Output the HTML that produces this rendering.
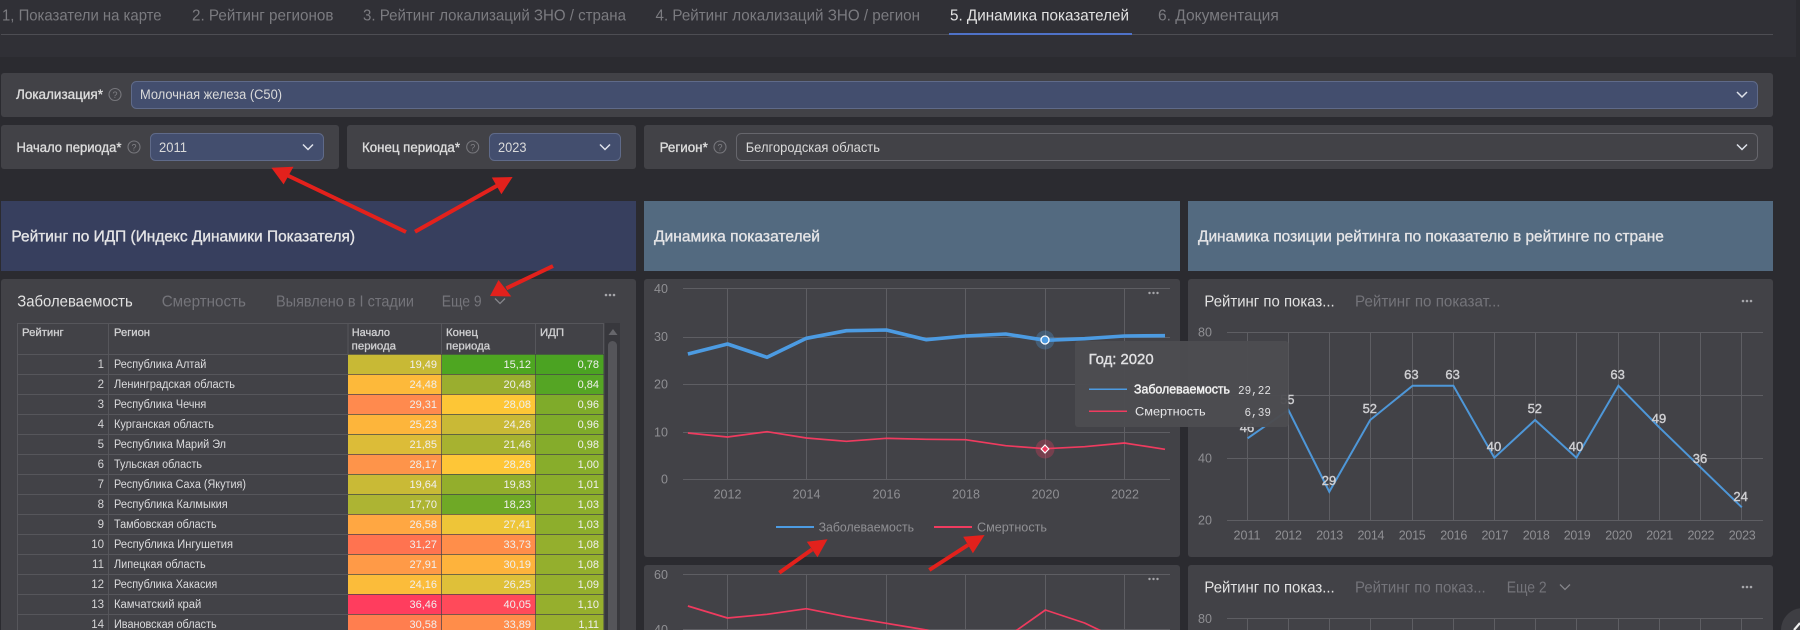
<!DOCTYPE html>
<html lang="ru"><head><meta charset="utf-8"><title>Динамика показателей</title>
<style>
html,body{margin:0;padding:0;background:#2b2b30;width:1800px;height:630px;overflow:hidden}
svg{display:block}
text{font-family:"Liberation Sans",sans-serif}
.tab{font-size:16px;fill:#7b7b80}
.tabA{font-size:16px;fill:#e2e2e2}
.lab{font-size:13.5px;fill:#dcdcdc;stroke:#dcdcdc;stroke-width:.35}
.val{font-size:13.5px;fill:#dadada}
.hd{font-size:15.5px;fill:#e4e4e6;stroke:#e4e4e6;stroke-width:.35}
.t{font-size:16px;fill:#74747a}
.ta{font-size:16px;fill:#e2e2e2}
.th{font-size:11px;fill:#d0d0d2;stroke:#d0d0d2;stroke-width:.3}
.n{font-size:11.5px;fill:#d4d4d6;text-anchor:end}
.r{font-size:11.5px;fill:#dcdcde}
.v{font-size:11px;fill:#f0f0f0;text-anchor:end}
.ax{font-size:12.5px;fill:#8f8f93}
.axm{font-size:12.5px;fill:#8f8f93;text-anchor:middle}
.dl{font-size:13px;fill:#cfcfd2;stroke:#cfcfd2;stroke-width:.4;text-anchor:middle}
.g{stroke:#5e5e63;stroke-width:1;fill:none}
.chev{fill:none;stroke:#dfe2ea;stroke-width:1.5}
.help{fill:none;stroke:#77777c;stroke-width:1.1}
.q{font-size:9px;fill:#808085;text-anchor:middle}
.dots{fill:#a6a6aa}
.red{fill:#e3211c}
.redl{stroke:#e3211c;stroke-width:4;fill:none}
</style></head>
<body>
<svg width="1800" height="630" viewBox="0 0 1800 630" xmlns="http://www.w3.org/2000/svg">
<rect width="1800" height="630" fill="#2b2b30"/>
<rect width="1796" height="57" fill="#303036"/>

<!-- tabs -->
<text class="tab" x="2" y="20.5" textLength="159.6" lengthAdjust="spacingAndGlyphs">1, Показатели на карте</text>
<text class="tab" x="192" y="20.5" textLength="141.5" lengthAdjust="spacingAndGlyphs">2. Рейтинг регионов</text>
<text class="tab" x="363" y="20.5" textLength="263" lengthAdjust="spacingAndGlyphs">3. Рейтинг локализаций ЗНО / страна</text>
<text class="tab" x="655.5" y="20.5" textLength="264.5" lengthAdjust="spacingAndGlyphs">4. Рейтинг локализаций ЗНО / регион</text>
<text class="tabA" x="950" y="20.5" textLength="179" lengthAdjust="spacingAndGlyphs">5. Динамика показателей</text>
<text class="tab" x="1158" y="20.5" textLength="120.8" lengthAdjust="spacingAndGlyphs">6. Документация</text>
<rect x="1" y="34" width="1772" height="1" fill="#4d4d53"/>
<rect x="949" y="33" width="183" height="2" fill="#4f72c8"/>

<!-- filter panels -->
<rect x="1" y="73" width="1772" height="44" rx="3" fill="#424247"/>
<rect x="131.5" y="81.5" width="1626" height="27" rx="5" fill="#434e6e" stroke="#5f6a89"/>
<text class="lab" x="16" y="99" textLength="87" lengthAdjust="spacingAndGlyphs">Локализация*</text>
<circle class="help" cx="115" cy="94.5" r="6"/><text class="q" x="115" y="98">?</text>
<text class="val" x="140" y="99" textLength="142" lengthAdjust="spacingAndGlyphs">Молочная железа (С50)</text>
<path class="chev" d="M1737 92l5 5 5-5"/>

<rect x="1" y="125" width="338" height="44" rx="3" fill="#424247"/>
<rect x="150.5" y="133.5" width="173" height="27" rx="5" fill="#434e6e" stroke="#5f6a89"/>
<text class="lab" x="16.5" y="152" textLength="105" lengthAdjust="spacingAndGlyphs">Начало периода*</text>
<circle class="help" cx="134" cy="147" r="6"/><text class="q" x="134" y="150.5">?</text>
<text class="val" x="159" y="152" textLength="28" lengthAdjust="spacingAndGlyphs">2011</text>
<path class="chev" d="M303 144.5l5 5 5-5"/>

<rect x="347" y="125" width="289" height="44" rx="3" fill="#424247"/>
<rect x="489.5" y="133.5" width="131" height="27" rx="5" fill="#434e6e" stroke="#5f6a89"/>
<text class="lab" x="362" y="152" textLength="98" lengthAdjust="spacingAndGlyphs">Конец периода*</text>
<circle class="help" cx="472.7" cy="147" r="6"/><text class="q" x="472.7" y="150.5">?</text>
<text class="val" x="498" y="152" textLength="28.5" lengthAdjust="spacingAndGlyphs">2023</text>
<path class="chev" d="M600 144.5l5 5 5-5"/>

<rect x="644" y="125" width="1129" height="44" rx="3" fill="#424247"/>
<rect x="736.5" y="133.5" width="1021" height="27" rx="5" fill="#424247" stroke="#66666c"/>
<text class="lab" x="659.6" y="152" textLength="48.2" lengthAdjust="spacingAndGlyphs">Регион*</text>
<circle class="help" cx="720" cy="147" r="6"/><text class="q" x="720" y="150.5">?</text>
<text class="val" x="745.7" y="152" textLength="134.3" lengthAdjust="spacingAndGlyphs">Белгородская область</text>
<path class="chev" d="M1737 144.5l5 5 5-5"/>

<!-- header bands -->
<rect x="1" y="201" width="635" height="70" fill="#373f5e"/>
<rect x="644" y="201" width="536" height="70" fill="#536a80"/>
<rect x="1188" y="201" width="585" height="70" fill="#536a80"/>
<text class="hd" x="11.4" y="241.5" textLength="343.6" lengthAdjust="spacingAndGlyphs">Рейтинг по ИДП (Индекс Динамики Показателя)</text>
<text class="hd" x="654" y="241.5" textLength="166" lengthAdjust="spacingAndGlyphs">Динамика показателей</text>
<text class="hd" x="1198" y="241.5" textLength="465.8" lengthAdjust="spacingAndGlyphs">Динамика позиции рейтинга по показателю в рейтинге по стране</text>

<!-- left panel -->
<rect x="1" y="279" width="635" height="360" rx="3" fill="#424247"/>
<text class="ta" x="17.3" y="306.5" textLength="115.4" lengthAdjust="spacingAndGlyphs">Заболеваемость</text>
<text class="t" x="161.7" y="306.5" textLength="84.3" lengthAdjust="spacingAndGlyphs">Смертность</text>
<text class="t" x="276" y="306.5" textLength="138" lengthAdjust="spacingAndGlyphs">Выявлено в I стадии</text>
<text class="t" x="441.7" y="306.5" textLength="40" lengthAdjust="spacingAndGlyphs">Еще 9</text>
<path d="M495 298.5l5 5 5-5" fill="none" stroke="#85858a" stroke-width="1.3"/>
<g class="dots"><circle cx="606" cy="295" r="1.3"/><circle cx="610" cy="295" r="1.3"/><circle cx="614" cy="295" r="1.3"/></g>

<!-- table grid -->
<g stroke="#56565b" fill="none">
<path d="M17.5 323.5H603.5M17.5 354.5H348M17.5 374.5H348M17.5 394.5H348M17.5 414.5H348M17.5 434.5H348M17.5 454.5H348M17.5 474.5H348M17.5 494.5H348M17.5 514.5H348M17.5 534.5H348M17.5 554.5H348M17.5 574.5H348M17.5 594.5H348M17.5 614.5H348"/>
<path d="M17.5 323V630M108.5 323V630M348 323V354M441.5 323V354M535.5 323V354M603.5 323V354"/>
</g>
<text class="th" x="22" y="336" textLength="41.7" lengthAdjust="spacingAndGlyphs">Рейтинг</text>
<text class="th" x="114" y="336" textLength="36" lengthAdjust="spacingAndGlyphs">Регион</text>
<text class="th" x="351.7" y="336" textLength="38.3" lengthAdjust="spacingAndGlyphs">Начало</text>
<text class="th" x="351.7" y="349.5" textLength="44.3" lengthAdjust="spacingAndGlyphs">периода</text>
<text class="th" x="446" y="336" textLength="32" lengthAdjust="spacingAndGlyphs">Конец</text>
<text class="th" x="446" y="349.5" textLength="44" lengthAdjust="spacingAndGlyphs">периода</text>
<text class="th" x="540" y="336" textLength="24" lengthAdjust="spacingAndGlyphs">ИДП</text>

<!-- scrollbar -->
<rect x="605" y="323" width="15" height="307" fill="#38383d"/>
<path d="M608.5 335l4.5-6 4.5 6z" fill="#66666b"/>
<rect x="608" y="341" width="9" height="295" rx="4.5" fill="#55555a"/>

<!-- cells -->
<g>
<rect x="348" y="354.7" width="93.3" height="19.3" fill="#c8b935"/><rect x="442" y="354.7" width="93.3" height="19.3" fill="#4ea621"/><rect x="536" y="354.7" width="67.5" height="19.3" fill="#4ba322"/>
<rect x="348" y="374.7" width="93.3" height="19.3" fill="#fdb93a"/><rect x="442" y="374.7" width="93.3" height="19.3" fill="#9aae2f"/><rect x="536" y="374.7" width="67.5" height="19.3" fill="#55a524"/>
<rect x="348" y="394.7" width="93.3" height="19.3" fill="#ff8a4e"/><rect x="442" y="394.7" width="93.3" height="19.3" fill="#fdc636"/><rect x="536" y="394.7" width="67.5" height="19.3" fill="#7fab2a"/>
<rect x="348" y="414.7" width="93.3" height="19.3" fill="#fdb53b"/><rect x="442" y="414.7" width="93.3" height="19.3" fill="#c9b936"/><rect x="536" y="414.7" width="67.5" height="19.3" fill="#7fab2a"/>
<rect x="348" y="434.7" width="93.3" height="19.3" fill="#dcbc38"/><rect x="442" y="434.7" width="93.3" height="19.3" fill="#a7b230"/><rect x="536" y="434.7" width="67.5" height="19.3" fill="#85ac2b"/>
<rect x="348" y="454.7" width="93.3" height="19.3" fill="#fe944a"/><rect x="442" y="454.7" width="93.3" height="19.3" fill="#fec637"/><rect x="536" y="454.7" width="67.5" height="19.3" fill="#88ad2b"/>
<rect x="348" y="474.7" width="93.3" height="19.3" fill="#c9ba36"/><rect x="442" y="474.7" width="93.3" height="19.3" fill="#93ae2c"/><rect x="536" y="474.7" width="67.5" height="19.3" fill="#8aad2b"/>
<rect x="348" y="494.7" width="93.3" height="19.3" fill="#adb433"/><rect x="442" y="494.7" width="93.3" height="19.3" fill="#6fa926"/><rect x="536" y="494.7" width="67.5" height="19.3" fill="#8dae2c"/>
<rect x="348" y="514.7" width="93.3" height="19.3" fill="#ffa742"/><rect x="442" y="514.7" width="93.3" height="19.3" fill="#eec538"/><rect x="536" y="514.7" width="67.5" height="19.3" fill="#8dae2c"/>
<rect x="348" y="534.7" width="93.3" height="19.3" fill="#ff7350"/><rect x="442" y="534.7" width="93.3" height="19.3" fill="#ff8e4a"/><rect x="536" y="534.7" width="67.5" height="19.3" fill="#94af2d"/>
<rect x="348" y="554.7" width="93.3" height="19.3" fill="#ff9a47"/><rect x="442" y="554.7" width="93.3" height="19.3" fill="#feb33c"/><rect x="536" y="554.7" width="67.5" height="19.3" fill="#94af2d"/>
<rect x="348" y="574.7" width="93.3" height="19.3" fill="#fbbc3a"/><rect x="442" y="574.7" width="93.3" height="19.3" fill="#dfc039"/><rect x="536" y="574.7" width="67.5" height="19.3" fill="#95af2d"/>
<rect x="348" y="594.7" width="93.3" height="19.3" fill="#ff3d5e"/><rect x="442" y="594.7" width="93.3" height="19.3" fill="#ff4a5a"/><rect x="536" y="594.7" width="67.5" height="19.3" fill="#96af2d"/>
<rect x="348" y="614.7" width="93.3" height="19.3" fill="#ff7e4f"/><rect x="442" y="614.7" width="93.3" height="19.3" fill="#ff8d4a"/><rect x="536" y="614.7" width="67.5" height="19.3" fill="#98af2e"/>
</g>

<g>
<text class="n" x="104" y="368">1</text><text class="r" x="114" y="368" textLength="92.3" lengthAdjust="spacingAndGlyphs">Республика Алтай</text><text class="v" x="437" y="368">19,49</text><text class="v" x="531" y="368">15,12</text><text class="v" x="599" y="368">0,78</text>
<text class="n" x="104" y="388">2</text><text class="r" x="114" y="388" textLength="121" lengthAdjust="spacingAndGlyphs">Ленинградская область</text><text class="v" x="437" y="388">24,48</text><text class="v" x="531" y="388">20,48</text><text class="v" x="599" y="388">0,84</text>
<text class="n" x="104" y="408">3</text><text class="r" x="114" y="408" textLength="92.3" lengthAdjust="spacingAndGlyphs">Республика Чечня</text><text class="v" x="437" y="408">29,31</text><text class="v" x="531" y="408">28,08</text><text class="v" x="599" y="408">0,96</text>
<text class="n" x="104" y="428">4</text><text class="r" x="114" y="428" textLength="100" lengthAdjust="spacingAndGlyphs">Курганская область</text><text class="v" x="437" y="428">25,23</text><text class="v" x="531" y="428">24,26</text><text class="v" x="599" y="428">0,96</text>
<text class="n" x="104" y="448">5</text><text class="r" x="114" y="448" textLength="112" lengthAdjust="spacingAndGlyphs">Республика Марий Эл</text><text class="v" x="437" y="448">21,85</text><text class="v" x="531" y="448">21,46</text><text class="v" x="599" y="448">0,98</text>
<text class="n" x="104" y="468">6</text><text class="r" x="114" y="468" textLength="88" lengthAdjust="spacingAndGlyphs">Тульская область</text><text class="v" x="437" y="468">28,17</text><text class="v" x="531" y="468">28,26</text><text class="v" x="599" y="468">1,00</text>
<text class="n" x="104" y="488">7</text><text class="r" x="114" y="488" textLength="132" lengthAdjust="spacingAndGlyphs">Республика Саха (Якутия)</text><text class="v" x="437" y="488">19,64</text><text class="v" x="531" y="488">19,83</text><text class="v" x="599" y="488">1,01</text>
<text class="n" x="104" y="508">8</text><text class="r" x="114" y="508" textLength="113.7" lengthAdjust="spacingAndGlyphs">Республика Калмыкия</text><text class="v" x="437" y="508">17,70</text><text class="v" x="531" y="508">18,23</text><text class="v" x="599" y="508">1,03</text>
<text class="n" x="104" y="528">9</text><text class="r" x="114" y="528" textLength="102.7" lengthAdjust="spacingAndGlyphs">Тамбовская область</text><text class="v" x="437" y="528">26,58</text><text class="v" x="531" y="528">27,41</text><text class="v" x="599" y="528">1,03</text>
<text class="n" x="104" y="548">10</text><text class="r" x="114" y="548" textLength="119" lengthAdjust="spacingAndGlyphs">Республика Ингушетия</text><text class="v" x="437" y="548">31,27</text><text class="v" x="531" y="548">33,73</text><text class="v" x="599" y="548">1,08</text>
<text class="n" x="104" y="568">11</text><text class="r" x="114" y="568" textLength="91.7" lengthAdjust="spacingAndGlyphs">Липецкая область</text><text class="v" x="437" y="568">27,91</text><text class="v" x="531" y="568">30,19</text><text class="v" x="599" y="568">1,08</text>
<text class="n" x="104" y="588">12</text><text class="r" x="114" y="588" textLength="103.3" lengthAdjust="spacingAndGlyphs">Республика Хакасия</text><text class="v" x="437" y="588">24,16</text><text class="v" x="531" y="588">26,25</text><text class="v" x="599" y="588">1,09</text>
<text class="n" x="104" y="608">13</text><text class="r" x="114" y="608" textLength="87.3" lengthAdjust="spacingAndGlyphs">Камчатский край</text><text class="v" x="437" y="608">36,46</text><text class="v" x="531" y="608">40,05</text><text class="v" x="599" y="608">1,10</text>
<text class="n" x="104" y="628">14</text><text class="r" x="114" y="628" textLength="102.7" lengthAdjust="spacingAndGlyphs">Ивановская область</text><text class="v" x="437" y="628">30,58</text><text class="v" x="531" y="628">33,89</text><text class="v" x="599" y="628">1,11</text>
</g>

<!-- center chart 1 -->
<rect x="644" y="279" width="536" height="278" rx="3" fill="#424247"/>
<path class="g" d="M683 288.5H1170M683 337.5H1170M683 384.5H1170M683 432.5H1170M683 479.5H1170"/>
<path class="g" d="M727.5 289V479M806.5 289V479M886.5 289V479M965.5 289V479M1045.5 289V479M1124.5 289V479"/>
<text class="ax" x="654" y="293">40</text><text class="ax" x="654" y="341">30</text><text class="ax" x="654" y="388.5">20</text><text class="ax" x="654" y="436.5">10</text><text class="ax" x="661" y="483.5">0</text>
<text class="axm" x="727.5" y="498.5">2012</text><text class="axm" x="806.5" y="498.5">2014</text><text class="axm" x="886.5" y="498.5">2016</text><text class="axm" x="966" y="498.5">2018</text><text class="axm" x="1045.5" y="498.5">2020</text><text class="axm" x="1125" y="498.5">2022</text>
<polyline fill="none" stroke="#4c9be2" stroke-width="3.6" stroke-linejoin="round" points="687.9,354 727.5,344 767.1,357.3 806.4,338.3 846.4,330.7 886.4,330 926.4,339.7 965.4,336 1005.7,334 1045.4,340.3 1084.6,338.7 1124.3,336 1165,335.7"/>
<polyline fill="none" stroke="#ef3b5f" stroke-width="1.7" stroke-linejoin="round" points="687.9,433 727.5,437 767.1,431.7 806.4,438 846.4,441.3 886.4,438.3 926.4,439.3 965.4,439.7 1005.7,445.7 1045.4,448.7 1084.6,446.7 1124.3,443 1165,449.3"/>
<circle cx="1045" cy="340" r="9.5" fill="#4c9be2" fill-opacity=".3"/>
<circle cx="1045" cy="340" r="4" fill="#4c9be2" stroke="#fff" stroke-width="1.3"/>
<circle cx="1045" cy="449" r="9.5" fill="#ef3b5f" fill-opacity=".3"/>
<path d="M1045 445l3.8 4-3.8 4-3.8-4z" fill="#ef3b5f" stroke="#fff" stroke-width="1.2"/>
<rect x="776" y="526" width="38" height="2" fill="#4c9be2"/>
<text class="ax" x="818.6" y="531.5" textLength="95.5" lengthAdjust="spacingAndGlyphs">Заболеваемость</text>
<rect x="934" y="526" width="38" height="2" fill="#ef3b5f"/>
<text class="ax" x="977" y="531.5" textLength="70" lengthAdjust="spacingAndGlyphs">Смертность</text>
<g class="dots"><circle cx="1149.5" cy="293" r="1.2"/><circle cx="1153.5" cy="293" r="1.2"/><circle cx="1157.5" cy="293" r="1.2"/></g>

<!-- center chart 2 -->
<rect x="644" y="565" width="536" height="80" rx="3" fill="#424247"/>
<path class="g" d="M683 574.5H1170M683 629.5H1170"/>
<path class="g" d="M727.5 575V630M806.5 575V630M886.5 575V630M965.5 575V630M1045.5 575V630M1124.5 575V630"/>
<text class="ax" x="654" y="579">60</text><text class="ax" x="654" y="634">40</text>
<polyline fill="none" stroke="#ef3b5f" stroke-width="1.7" stroke-linejoin="round" points="687.9,606 727.5,618 767.1,614.3 806.4,608.7 846.4,616.7 886.4,623.3 926.4,630 965.4,640 1005.7,638 1045.4,610 1084.6,623 1124.3,642"/>
<g class="dots"><circle cx="1149.5" cy="579" r="1.2"/><circle cx="1153.5" cy="579" r="1.2"/><circle cx="1157.5" cy="579" r="1.2"/></g>

<!-- right chart 1 -->
<rect x="1188" y="279" width="585" height="278" rx="3" fill="#424247"/>
<text class="ta" x="1204.4" y="306.5" textLength="130.3" lengthAdjust="spacingAndGlyphs">Рейтинг по показ...</text>
<text class="t" x="1355" y="306.5" textLength="145.5" lengthAdjust="spacingAndGlyphs">Рейтинг по показат...</text>
<g class="dots"><circle cx="1743" cy="301" r="1.3"/><circle cx="1747" cy="301" r="1.3"/><circle cx="1751" cy="301" r="1.3"/></g>
<path class="g" d="M1227 332.5H1763M1227 395.5H1763M1227 458.5H1763M1227 520.5H1763"/>
<path class="g" d="M1247.5 333V520M1288.5 333V520M1329.5 333V520M1370.5 333V520M1412.5 333V520M1453.5 333V520M1494.5 333V520M1535.5 333V520M1576.5 333V520M1618.5 333V520M1659.5 333V520M1700.5 333V520M1741.5 333V520"/>
<text class="ax" x="1198" y="336.5">80</text><text class="ax" x="1198" y="462.5">40</text><text class="ax" x="1198" y="524.5">20</text>
<g>
<text class="axm" x="1247" y="539.5" textLength="27" lengthAdjust="spacing">2011</text><text class="axm" x="1288.4" y="539.5" textLength="27" lengthAdjust="spacing">2012</text><text class="axm" x="1329.7" y="539.5" textLength="27" lengthAdjust="spacing">2013</text><text class="axm" x="1371" y="539.5" textLength="27" lengthAdjust="spacing">2014</text><text class="axm" x="1412.2" y="539.5" textLength="27" lengthAdjust="spacing">2015</text><text class="axm" x="1453.8" y="539.5" textLength="27" lengthAdjust="spacing">2016</text><text class="axm" x="1495" y="539.5" textLength="27" lengthAdjust="spacing">2017</text><text class="axm" x="1536.3" y="539.5" textLength="27" lengthAdjust="spacing">2018</text><text class="axm" x="1577.2" y="539.5" textLength="27" lengthAdjust="spacing">2019</text><text class="axm" x="1618.8" y="539.5" textLength="27" lengthAdjust="spacing">2020</text><text class="axm" x="1659.7" y="539.5" textLength="27" lengthAdjust="spacing">2021</text><text class="axm" x="1701" y="539.5" textLength="27" lengthAdjust="spacing">2022</text><text class="axm" x="1742.2" y="539.5" textLength="27" lengthAdjust="spacing">2023</text>
</g>
<polyline fill="none" stroke="#4e97d8" stroke-width="2" stroke-linejoin="miter" points="1247.6,438.3 1288.4,410 1329.3,491.7 1370.2,420 1412.6,385.7 1453.4,385.7 1494.3,457.7 1535.1,420 1576.4,457.7 1618.4,385.7 1659.2,427.3 1700.5,467.3 1741.8,507.3"/>
<g>
<text class="dl" x="1247" y="432">46</text><text class="dl" x="1287.3" y="404">55</text><text class="dl" x="1329" y="485">29</text><text class="dl" x="1369.8" y="413">52</text><text class="dl" x="1411.4" y="379">63</text><text class="dl" x="1452.6" y="379">63</text><text class="dl" x="1494" y="451">40</text><text class="dl" x="1534.8" y="413">52</text><text class="dl" x="1576" y="451">40</text><text class="dl" x="1617.6" y="379">63</text><text class="dl" x="1659" y="423">49</text><text class="dl" x="1700" y="463">36</text><text class="dl" x="1740.6" y="501">24</text>
</g>

<!-- right chart 2 -->
<rect x="1188" y="565" width="585" height="80" rx="3" fill="#424247"/>
<text class="ta" x="1204.4" y="592.5" textLength="130.3" lengthAdjust="spacingAndGlyphs">Рейтинг по показ...</text>
<text class="t" x="1355" y="592.5" textLength="130.7" lengthAdjust="spacingAndGlyphs">Рейтинг по показ...</text>
<text class="t" x="1506.7" y="592.5" textLength="40" lengthAdjust="spacingAndGlyphs">Еще 2</text>
<path d="M1560 584.5l5 5 5-5" fill="none" stroke="#85858a" stroke-width="1.3"/>
<g class="dots"><circle cx="1743" cy="587" r="1.3"/><circle cx="1747" cy="587" r="1.3"/><circle cx="1751" cy="587" r="1.3"/></g>
<path class="g" d="M1227 618.5H1763"/>
<path class="g" d="M1247.5 619V630M1288.5 619V630M1329.5 619V630M1370.5 619V630M1412.5 619V630M1453.5 619V630M1494.5 619V630M1535.5 619V630M1576.5 619V630M1618.5 619V630M1659.5 619V630M1700.5 619V630M1741.5 619V630"/>
<text class="ax" x="1198" y="623">80</text>

<!-- tooltip -->
<rect x="1075" y="341" width="213.5" height="86" rx="3" fill="#4c4c51" fill-opacity=".97"/>
<text x="1088.6" y="364" font-size="14.5" fill="#e0e0e2" stroke="#e0e0e2" stroke-width=".4" textLength="65" lengthAdjust="spacingAndGlyphs">Год: 2020</text>
<rect x="1089" y="388.5" width="38" height="1.5" fill="#4c9be2"/>
<text x="1134" y="393.5" font-size="12.5" fill="#f0f0f0" stroke="#f0f0f0" stroke-width=".45" textLength="96" lengthAdjust="spacingAndGlyphs">Заболеваемость</text>
<text x="1238" y="394" font-size="11.5" fill="#dedee0" style="font-family:'Liberation Mono',monospace" textLength="33" lengthAdjust="spacingAndGlyphs">29,22</text>
<rect x="1089" y="410.5" width="38" height="1.5" fill="#ef3b5f"/>
<text x="1135" y="415.5" font-size="12" fill="#e6e6e8" textLength="70.6" lengthAdjust="spacingAndGlyphs">Смертность</text>
<text x="1244.5" y="416" font-size="11.5" fill="#dedee0" style="font-family:'Liberation Mono',monospace" textLength="26.5" lengthAdjust="spacingAndGlyphs">6,39</text>

<!-- red arrows -->
<path class="redl" d="M406 232L287.7 175.5"/><polygon class="red" points="271.4,167.7 293.5,166.8 283.6,184.4"/>
<path class="redl" d="M415 231.7L496.9 185.8"/><polygon class="red" points="512.6,177 491.8,177.5 501.4,194.2"/>
<path class="redl" d="M553 266L506.3 288.3"/><polygon class="red" points="490,296 511.3,296.5 498.5,280"/>
<path class="redl" d="M779.3 572.7L812 549.5"/><polygon class="red" points="827.5,539.3 806.8,541.7 817.5,557.3"/>
<path class="redl" d="M929.3 570L968 545"/><polygon class="red" points="984.6,535 963.2,536.7 972.9,553.3"/>

<!-- floating button -->
<circle cx="1803" cy="630" r="22" fill="#3e3e43"/>
<path d="M1794 630L1800 623" stroke="#f0f0f0" stroke-width="2.2" fill="none"/>
</svg>
</body></html>
